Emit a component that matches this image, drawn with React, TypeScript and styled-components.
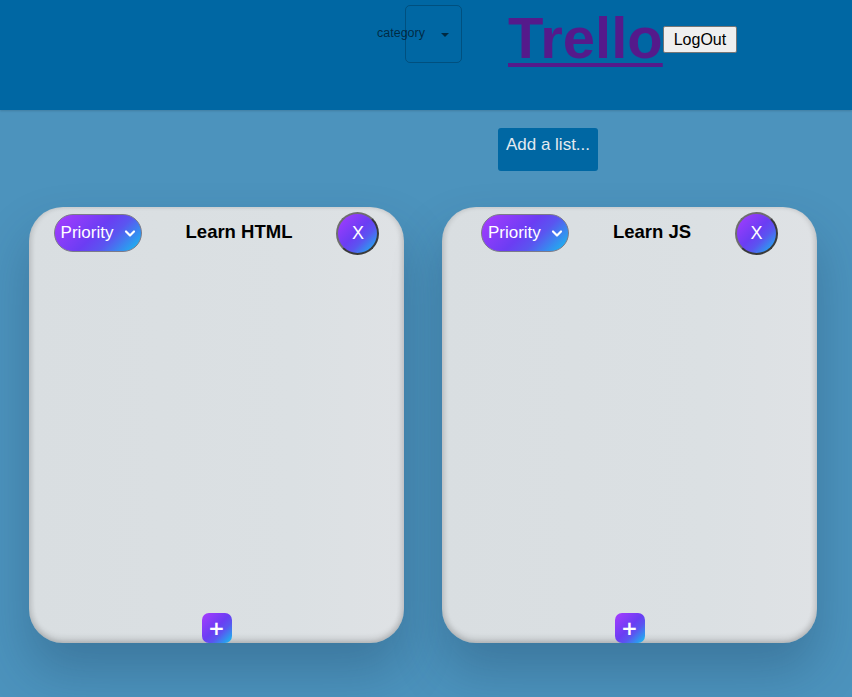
import React from "react";
import styled, { createGlobalStyle } from "styled-components";

const Global = createGlobalStyle`
  html, body { margin: 0; padding: 0; }
  body {
    background: #4c93bd;
    font-family: "Liberation Sans", Arial, sans-serif;
    min-height: 697px;
  }
`;

const Page = styled.div`
  min-height: 697px;
  display: flex;
  flex-direction: column;
`;

const Header = styled.header`
  height: 110px;
  background: #0067a3;
  box-shadow: 0 1px 2px rgba(0, 0, 0, 0.15);
  display: flex;
  align-items: flex-start;
  padding: 5px 0 0 405px;
  box-sizing: border-box;
`;

const CategoryControl = styled.div`
  position: relative;
  width: 57px;
  height: 58px;
  box-sizing: border-box;
  border: 1px solid rgba(0, 0, 0, 0.22);
  border-radius: 5px;
  display: flex;
  align-items: center;
  justify-content: flex-end;
  padding-right: 12px;
`;

const CategoryLabel = styled.span`
  position: absolute;
  left: -29px;
  top: 20px;
  font-size: 12.5px;
  color: rgba(0, 0, 0, 0.6);
  white-space: nowrap;
`;

const Caret = styled.span`
  width: 0;
  height: 0;
  border-left: 4px solid transparent;
  border-right: 4px solid transparent;
  border-top: 4px solid rgba(0, 0, 0, 0.6);
  margin-top: 2px;
`;

const Logo = styled.a`
  margin-left: 46px;
  font-family: "Comic Sans MS", "Liberation Sans", sans-serif;
  font-weight: 700;
  font-size: 58px;
  line-height: 66px;
  color: #551a8b;
  text-decoration: underline;
  text-decoration-thickness: 4px;
  text-underline-offset: 5px;
  cursor: pointer;
`;

const LogoutButton = styled.button`
  margin-top: 21px;
  font-family: "Liberation Sans", Arial, sans-serif;
  font-size: 16px;
  padding: 3px 10px;
  background: #efefef;
  color: #000;
  border: 1px solid #767676;
  border-radius: 2px;
  height: 27px;
`;

const Toolbar = styled.div`
  padding: 18px 0 0 498px;
`;

const AddListButton = styled.button`
  width: 100px;
  height: 43px;
  background: #0067a3;
  color: #e3eaf0;
  border: none;
  border-radius: 3px;
  font-family: "Liberation Sans", Arial, sans-serif;
  font-size: 17px;
  padding: 7px 0 0;
  display: flex;
  justify-content: center;
  align-items: flex-start;
`;

const Board = styled.div`
  display: flex;
  gap: 38px;
  padding: 36px 0 0 29px;
`;

const Card = styled.section`
  width: 375px;
  height: 436px;
  box-sizing: border-box;
  border-radius: 34px;
  background: linear-gradient(90deg, #d9dee1 0%, #dbe0e3 70%, #dfe2e5 100%);
  box-shadow: inset 0 -4px 6px rgba(0, 0, 0, 0.14),
    inset 3px 0 5px rgba(0, 0, 0, 0.07), inset -3px 0 5px rgba(0, 0, 0, 0.07),
    0 28px 50px rgba(20, 50, 80, 0.28);
  display: flex;
  flex-direction: column;
  align-items: center;
`;

const CardHeader = styled.div`
  display: flex;
  align-items: center;
  justify-content: center;
  gap: 44px;
  height: 52px;
  width: 100%;
`;

const gradient = `linear-gradient(135deg, #a83cff 0%, #6b3df3 48%, #5a55f0 65%, #12c4ef 100%)`;

const PrioritySelect = styled.div`
  width: 88px;
  height: 38px;
  box-sizing: border-box;
  border-radius: 19px;
  border: 1px solid #7b7b8a;
  background: ${gradient};
  color: #fff;
  font-size: 17px;
  display: flex;
  align-items: center;
  justify-content: space-between;
  padding: 0 4px 0 6px;
`;

const Title = styled.h3`
  margin: 0 0 2px;
  font-size: 18.5px;
  font-weight: 700;
  color: #000;
`;

const CloseButton = styled.button`
  width: 43px;
  height: 43px;
  border-radius: 50%;
  border: 2px solid #3a3a3a;
  border-top-color: #6e6e6e;
  border-left-color: #6e6e6e;
  background: ${gradient};
  color: #fff;
  font-family: "Liberation Sans", Arial, sans-serif;
  font-size: 18px;
  padding: 0;
  display: flex;
  align-items: center;
  justify-content: center;
`;

const AddCardButton = styled.button`
  margin-top: auto;
  width: 30px;
  height: 30px;
  border-radius: 7px;
  border: none;
  background: ${gradient};
  color: #fff;
  font-family: "DejaVu Sans", sans-serif;
  font-weight: 700;
  font-size: 20px;
  padding: 0;
  display: flex;
  align-items: center;
  justify-content: center;
`;

const Chevron = () => (
  <svg width="14" height="14" viewBox="0 0 14 14">
    <path d="M3 5.5 L7 9.5 L11 5.5" fill="none" stroke="#fff" strokeWidth="2.2" strokeLinecap="round" strokeLinejoin="round" />
  </svg>
);

const lists = ["Learn HTML", "Learn JS"];

export default function App() {
  return (
    <Page>
      <Global />
      <Header>
        <CategoryControl>
          <CategoryLabel>category</CategoryLabel>
          <Caret />
        </CategoryControl>
        <Logo>Trello</Logo>
        <LogoutButton>LogOut</LogoutButton>
      </Header>
      <Toolbar>
        <AddListButton>Add a list...</AddListButton>
      </Toolbar>
      <Board>
        {lists.map((name) => (
          <Card key={name}>
            <CardHeader>
              <PrioritySelect>
                <span>Priority</span>
                <Chevron />
              </PrioritySelect>
              <Title>{name}</Title>
              <CloseButton>X</CloseButton>
            </CardHeader>
            <AddCardButton>+</AddCardButton>
          </Card>
        ))}
      </Board>
    </Page>
  );
}
